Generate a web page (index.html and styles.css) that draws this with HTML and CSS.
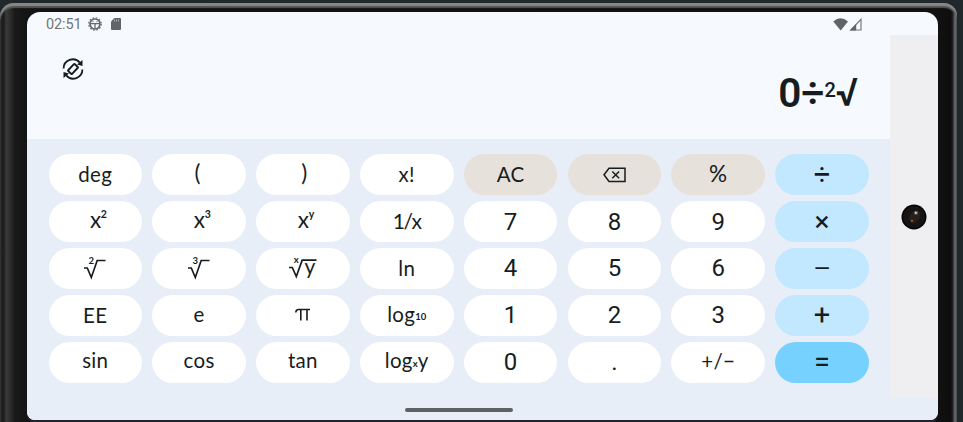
FILE: index.html
```html
<!DOCTYPE html>
<html lang="en">
<head>
<meta charset="utf-8">
<title>Calculator</title>
<link rel="stylesheet" href="styles.css">
</head>
<body>
<div class="device">
  <div class="screen">
    <header class="status">
      <time>02:51</time>
      <svg class="debug" width="14" height="14" viewBox="0 0 14 14"><circle cx="7" cy="7" r="5" fill="none" stroke="#67696c" stroke-width="1.700"/><circle cx="7" cy="7" r="6.200" fill="none" stroke="#67696c" stroke-width="1.300" stroke-dasharray="1.600 1.646"/><path d="M3 6.600h8M7 7v4.500M4.600 4.600h.9M8.500 4.600h.9" stroke="#67696c" stroke-width="1.300"/></svg>
      <svg class="card" width="10" height="12" viewBox="0 0 10 12"><path d="M3.400 0H9q1 0 1 1v10q0 1-1 1H1q-1 0-1-1V3.400Z" fill="#626467"/><path d="M3.500 1.500v2M5.500 1.500v2M7.500 1.500v2" stroke="#a7aaad"/></svg>
      <svg class="signal" width="29" height="13" viewBox="0 0 29 13"><path d="M.3 3.500Q7.500-2.800 15 3.500L7.700 12.500Z" fill="#626467"/><path d="M28 1.300V12H17.800Z" fill="none" stroke="#77797c" stroke-width="1.200"/><path d="M23.200 6V12.500H16.800Z" fill="#626467"/></svg>
    </header>
    <main class="app">
      <div class="calc">
        <section class="display">
          <svg class="rotate" width="22" height="22" viewBox="0 0 22 22" fill="none" stroke="#171d1e" stroke-width="1.800"><path d="M1.600 10.500A9.200 9.200 0 0 1 17.800 4.600M20.400 11.500A9.200 9.200 0 0 1 4.200 17.400"/><path d="M20.500 2V8L15 6.500ZM1.500 20V14L7 15.500Z" fill="#171d1e" stroke="none"/><rect x="8.300" y="6.300" width="5.400" height="9.400" rx=".5" transform="rotate(43 11 11)" stroke-width="1.900"/></svg>
          <output class="expression">0÷<small>2</small><span class="root">√</span></output>
        </section>
        <section class="keys">
          <button>deg</button><button class="paren">(</button><button class="paren close">)</button><button>x!</button>
          <button class="tool">AC</button>
          <button class="tool"><svg width="23" height="16" viewBox="0 0 23 16" fill="none" stroke="#171d1e" stroke-width="1.500"><path d="M6 1.200H22V14.400H6L1 7.800ZM9.300 4.500l6.800 6.700M16.100 4.500l-6.800 6.700"/></svg></button>
          <button class="tool percent">%</button><button class="op">÷</button>

          <button class="power">x<sup>2</sup></button><button class="power">x<sup>3</sup></button><button class="power">x<sup>y</sup></button><button class="reciprocal">1/x</button>
          <button class="num">7</button><button class="num">8</button><button class="num">9</button><button class="op times">×</button>

          <button><svg class="radical" width="22" height="24" viewBox="0 0 22 24"><path d="M0 12H3.300L7.300 21.500L13.200 4.500H21.500"/><text x="4.500" y="8">2</text></svg></button>
          <button><svg class="radical" width="22" height="24" viewBox="0 0 22 24"><path d="M0 12H3.300L7.300 21.500L13.200 4.500H21.500"/><text x="4.500" y="8">3</text></svg></button>
          <button><svg class="radical" width="28" height="24" viewBox="0 0 28 24"><path d="M0 11.500H3.300L7.300 20.500L13.200 4.200H27.500"/><text x="4.800" y="7">x</text><text class="operand" x="15.500" y="17.500">y</text></svg></button>
          <button>ln</button>
          <button class="num">4</button><button class="num">5</button><button class="num">6</button><button class="op minus">−</button>

          <button>EE</button><button class="raised">e</button>
          <button><svg width="15" height="13" viewBox="0 0 15 13" fill="none" stroke="#171d1e" stroke-width="1.600"><path d="M.8 4.500Q.8 1.500 3.800 1.500H15M5.800 1.500V12.500M12 1.500V12.500"/></svg></button>
          <button class="raised">log<sub>10</sub></button>
          <button class="num">1</button><button class="num">2</button><button class="num">3</button><button class="op">+</button>

          <button class="raised">sin</button><button class="raised">cos</button><button class="raised">tan</button><button class="raised">log<sub>x</sub>y</button>
          <button class="num">0</button><button class="num">.</button><button class="sign">+/−</button><button class="op equals">=</button>
        </section>
      </div>
      <aside class="cutout"><svg class="camera" width="26" height="26" viewBox="0 0 26 26"><circle cx="13" cy="13" r="12.500" fill="#050505"/><circle cx="13" cy="13" r="10.800" fill="#151413"/><ellipse cx="13.500" cy="12.500" rx="5" ry="7" fill="#25201e" transform="rotate(30 13 13)"/><circle cx="15" cy="9" r="2.100" fill="#655a56"/><circle cx="14.800" cy="8.700" r="1" fill="#d2e6db"/><circle cx="11" cy="16.700" r=".9" fill="#c87844"/></svg></aside>
    </main>
    <footer class="navigation"><i></i></footer>
  </div>
</div>
</body>
</html>
```
FILE: styles.css
```css
* { box-sizing: border-box; }
body { margin: 0; width: 963px; height: 422px; overflow: hidden; background: #20282b; font-family: Roboto, sans-serif; color: #171d1e; }
.device {
  width: 957px; height: 422px; margin-top: 3px; padding: 9px 19px 5px 27px;
  border-radius: 14px 13px 0 0;
  background: linear-gradient(90deg, #252525 0, #1c1c1c 4px, #393939 6px, #313131 9px, #191919 15px, #141414 27px, #111 938px, #0d0d0d 951px, #282828 953px, #707272 955px, #3b3d3e 957px);
  box-shadow: inset 0 3px 1px #868787, inset 0 5px 1px #555;
}
.screen { width: 911px; height: 408px; border-radius: 13px 13px 8px 8px; overflow: hidden; background: #f6faff; display: flex; flex-direction: column; box-shadow: 0 3px 0 #20242b; }
.status { height: 23px; flex: none; display: flex; align-items: center; padding: 1px 76.500px 0 19px; color: #727477; font-size: 14.500px; }
.status time { width: 36px; letter-spacing: -.1px; }
.debug { margin-left: 5.500px; }
.card { margin-left: 9.500px; }
.signal { margin-left: auto; }
.app { display: flex; height: 363px; flex: none; }
.calc { width: 863px; display: flex; flex-direction: column; }
.display { height: 104px; display: flex; justify-content: space-between; align-items: flex-start; padding: 23px 32px 0 35px; }
.expression { display: flex; align-items: flex-start; font-size: 40.500px; line-height: 71px; font-weight: 600; }
.expression small { font-size: 20px; font-weight: 500; line-height: 65px; }
.root { font-weight: 600; font-size: 39px; }
.keys { height: 259px; background: #e7eef7; padding: 15.200px 21.200px 15.400px 21.500px; display: grid; grid-template-columns: repeat(8, 1fr); grid-template-rows: repeat(5, 1fr); gap: 5.900px 10.300px; }
button { margin: 0; padding: 0 0 1px; border: 0; border-radius: 21px; background: #fff; color: #171d1e; font: 400 20.500px/1 Lato, sans-serif; display: flex; justify-content: center; align-items: center; min-width: 0; letter-spacing: .3px; }
button sup { font-size: 10.500px; font-weight: 700; line-height: 1; align-self: flex-start; margin: 8px 0 0; }
button sub { font-size: 9.500px; font-weight: 700; line-height: 1; margin-top: 6px; letter-spacing: 0; }
.power { font-size: 22.500px; padding: 0 0 3px 6px; letter-spacing: -.3px; }
.paren { font-size: 22.500px; padding: 0 3px 2px 0; }
.close { padding: 0 0 2px 3px; }
.raised { padding-bottom: 3px; }
.reciprocal { letter-spacing: -1.300px; font-size: 21px; padding-bottom: 2px; }
.num { font: 400 24px/1 Roboto, sans-serif; padding: 0; letter-spacing: 0; }
.tool { background: #e7e1dc; padding: 0; }
.percent { font-size: 22.500px; }
.op { background: #c2e8ff; font: 400 29px/1 Roboto, sans-serif; padding: 1px 0 0; letter-spacing: 0; }
.minus { font-size: 33px; font-weight: 300; padding: 0; }
.times { font-weight: 400; font-size: 28px; padding: 0; }
.equals { background: #76d1ff; }
.radical { overflow: visible; }
.radical path { fill: none; stroke: #171d1e; stroke-width: 1.700; }
.radical text { font: 700 9.500px Lato, sans-serif; fill: #171d1e; letter-spacing: 0; }
.radical .operand { font-weight: 400; font-size: 21px; }
.cutout { width: 48px; background: #efeff1; display: flex; justify-content: center; padding-top: 169px; }
.navigation { flex: 1; background: #e7eef7; display: flex; justify-content: center; padding: 9.500px 48px 0 0; }
.navigation i { width: 108px; height: 4px; border-radius: 2px; background: #5f6265; }
```
